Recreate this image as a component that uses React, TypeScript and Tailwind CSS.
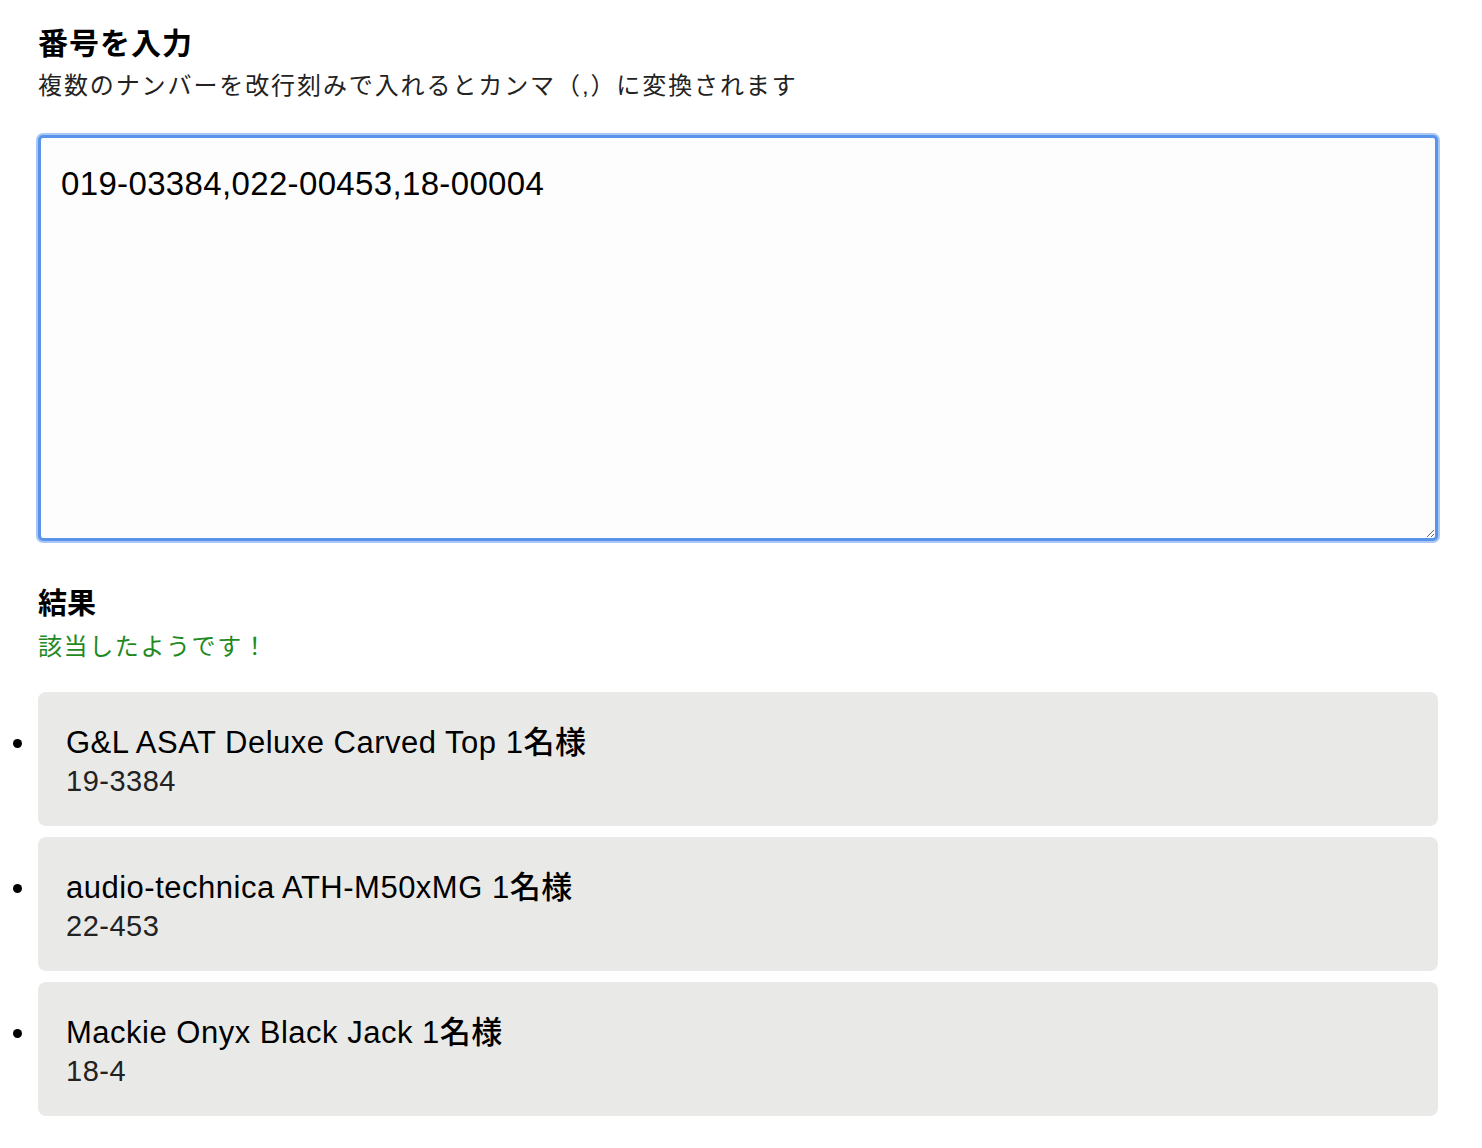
import React from "react";

const results = [
  { title: "G&L ASAT Deluxe Carved Top 1名様", code: "19-3384" },
  { title: "audio-technica ATH-M50xMG 1名様", code: "22-453" },
  { title: "Mackie Onyx Black Jack 1名様", code: "18-4" },
];

const font = {
  fontFamily: '"Liberation Sans", "Noto Sans CJK JP", sans-serif',
};

export default function App() {
  return (
    <div className="bg-white text-black pl-[38px] pr-[44px] pt-[24px] pb-[30px]" style={font}>
      {/* Input */}
      <h2 className="text-[30px] font-bold leading-[40px] tracking-[1px]">番号を入力</h2>
      <p className="mt-[6px] text-[24px] leading-[32px] tracking-[1.9px] text-[#222]">
        複数のナンバーを改行刻みで入れるとカンマ（,）に変換されます
      </p>
      <textarea
        defaultValue="019-03384,022-00453,18-00004"
        className="mt-[33px] block w-full h-[406px] rounded-[5px] border-[3px] border-[#5a93ea] bg-[#fdfdfd] px-[20px] py-[26px] text-[33px] leading-[40px] tracking-[0.35px] text-black outline-none ring-[2px] ring-[#a9c8f6]"
        style={font}
      />

      {/* Result */}
      <h2 className="mt-[43px] text-[29px] font-bold leading-[40px]">結果</h2>
      <p className="mt-[6px] text-[24px] leading-[34px] tracking-[1.6px] text-[#1f8a1f]">該当したようです！</p>

      <ul className="mt-[28px] -ml-[38px] pl-[38px] list-disc flex flex-col gap-[11px] marker:text-[30px]">
        {results.map((item, i) => (
          <li
            key={i}
            className="rounded-[8px] bg-[#e9eae8] pl-[28px] pr-6 pt-[32px] pb-[27px] text-[31px] leading-[38px]"
          >
            <div className="text-[31px] leading-[38px] font-medium tracking-[0.5px]">{item.title}</div>
            <div className="mt-[1px] text-[29px] leading-[36px] text-[#222] tracking-[0.5px]">{item.code}</div>
          </li>
        ))}
      </ul>
    </div>
  );
}
